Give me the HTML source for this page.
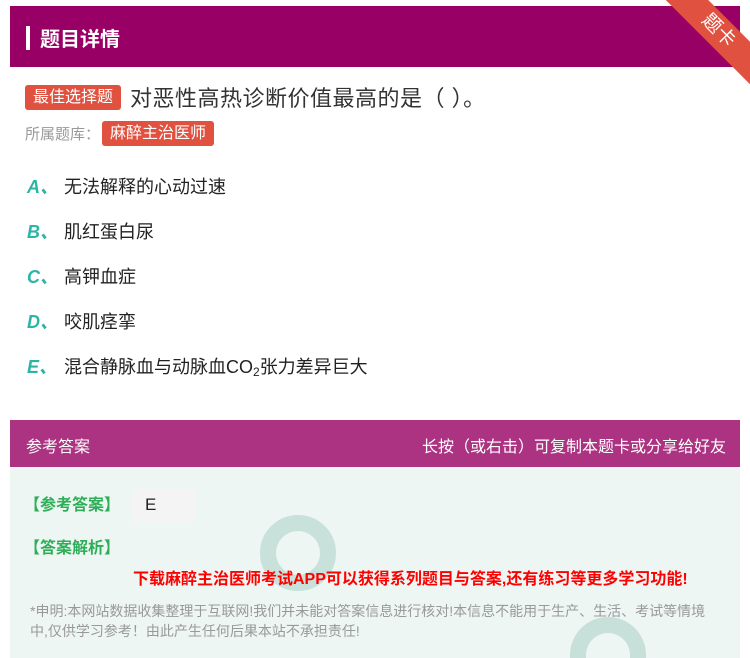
<!DOCTYPE html>
<html><head><meta charset="utf-8"><style>
*{margin:0;padding:0;box-sizing:border-box}
html,body{width:750px;height:658px;overflow:hidden}
body{background:#fff;font-family:"Liberation Sans","Noto Sans CJK SC",sans-serif;position:relative}
.hd{position:absolute;left:10px;top:6px;width:730px;height:61px;background:#990066}
.hd .bar{position:absolute;left:16px;top:20px;width:4px;height:24px;background:#fff}
.hd .t{position:absolute;left:30px;top:17px;color:#fff;font-size:20px;font-weight:bold}
.rib{position:absolute;width:140px;height:30px;background:#e0513f;color:#fff;transform:rotate(45deg);text-align:center;font-size:19px;line-height:30px;right:-38px;top:16px}
.tag{display:inline-block;background:#e0513f;color:#fff;font-size:16px;border-radius:3px;padding:0 8px;height:25px;line-height:25px}
.q{position:absolute;left:25px;top:81px;display:flex;align-items:center}
.q span.txt{font-size:22px;color:#333;margin-left:9px;letter-spacing:0.5px}
.lib{position:absolute;left:25px;top:121px;display:flex;align-items:center;font-size:15px;color:#999}
.opt{position:absolute;left:27px;font-size:18px;color:#222;line-height:22px;white-space:nowrap}
.opt b{color:#2bb5a4;font-style:italic;font-size:18px;display:inline-block;width:37px}
.opt sub{font-size:12px;line-height:0;position:relative;top:3px;vertical-align:baseline}
.ah{position:absolute;left:10px;top:420px;width:730px;height:47px;background:#ab3382;color:#fff;font-size:16px}
.ah .l{position:absolute;left:16px;top:13px}.ah .r{position:absolute;right:14px;top:13px}
.ab{position:absolute;left:10px;top:467px;width:730px;height:191px;background:#eef6f4;overflow:hidden}
.g{color:#2fae58;font-weight:bold;font-size:16px;position:absolute}
.red{position:absolute;left:123px;top:98px;color:#f00;font-weight:bold;font-size:16px;white-space:nowrap}
.dis{position:absolute;left:20px;top:134px;width:690px;color:#999;font-size:14px;line-height:20px}
.ring{position:absolute;border-radius:50%;border:16px solid #b8d8d0;opacity:.7}
</style></head><body>
<div class="hd"><div class="bar"></div><div class="t">题目详情</div></div>
<div class="rib">题卡</div>
<div class="q"><span class="tag">最佳选择题</span><span class="txt">对恶性高热诊断价值最高的是（ ）。</span></div>
<div class="lib">所属题库：<span class="tag" style="margin-left:2px">麻醉主治医师</span></div>
<div class="opt" style="top:176px"><b>A、</b>无法解释的心动过速</div>
<div class="opt" style="top:221px"><b>B、</b>肌红蛋白尿</div>
<div class="opt" style="top:266px"><b>C、</b>高钾血症</div>
<div class="opt" style="top:311px"><b>D、</b>咬肌痉挛</div>
<div class="opt" style="top:356px"><b>E、</b>混合静脉血与动脉血CO<sub>2</sub>张力差异巨大</div>
<div class="ah"><span class="l">参考答案</span><span class="r">长按（或右击）可复制本题卡或分享给好友</span></div>
<div class="ab">
<div class="ring" style="left:250px;top:48px;width:76px;height:76px"></div>
<div class="ring" style="left:560px;top:150px;width:76px;height:41px;border-bottom:0;border-radius:38px 38px 0 0"></div>
<div class="g" style="left:14px;top:24px">【参考答案】</div>
<div style="position:absolute;left:121px;top:22px;width:64px;height:32px;background:#f4f4f4;font-size:17px;color:#222;padding:6px 0 0 14px">E</div>
<div class="g" style="left:14px;top:67px">【答案解析】</div>
<div class="red">下载麻醉主治医师考试APP可以获得系列题目与答案,还有练习等更多学习功能!</div>
<div class="dis">*申明:本网站数据收集整理于互联网!我们并未能对答案信息进行核对!本信息不能用于生产、生活、考试等情境中,仅供学习参考！由此产生任何后果本站不承担责任!</div>
</div>
</body></html>
